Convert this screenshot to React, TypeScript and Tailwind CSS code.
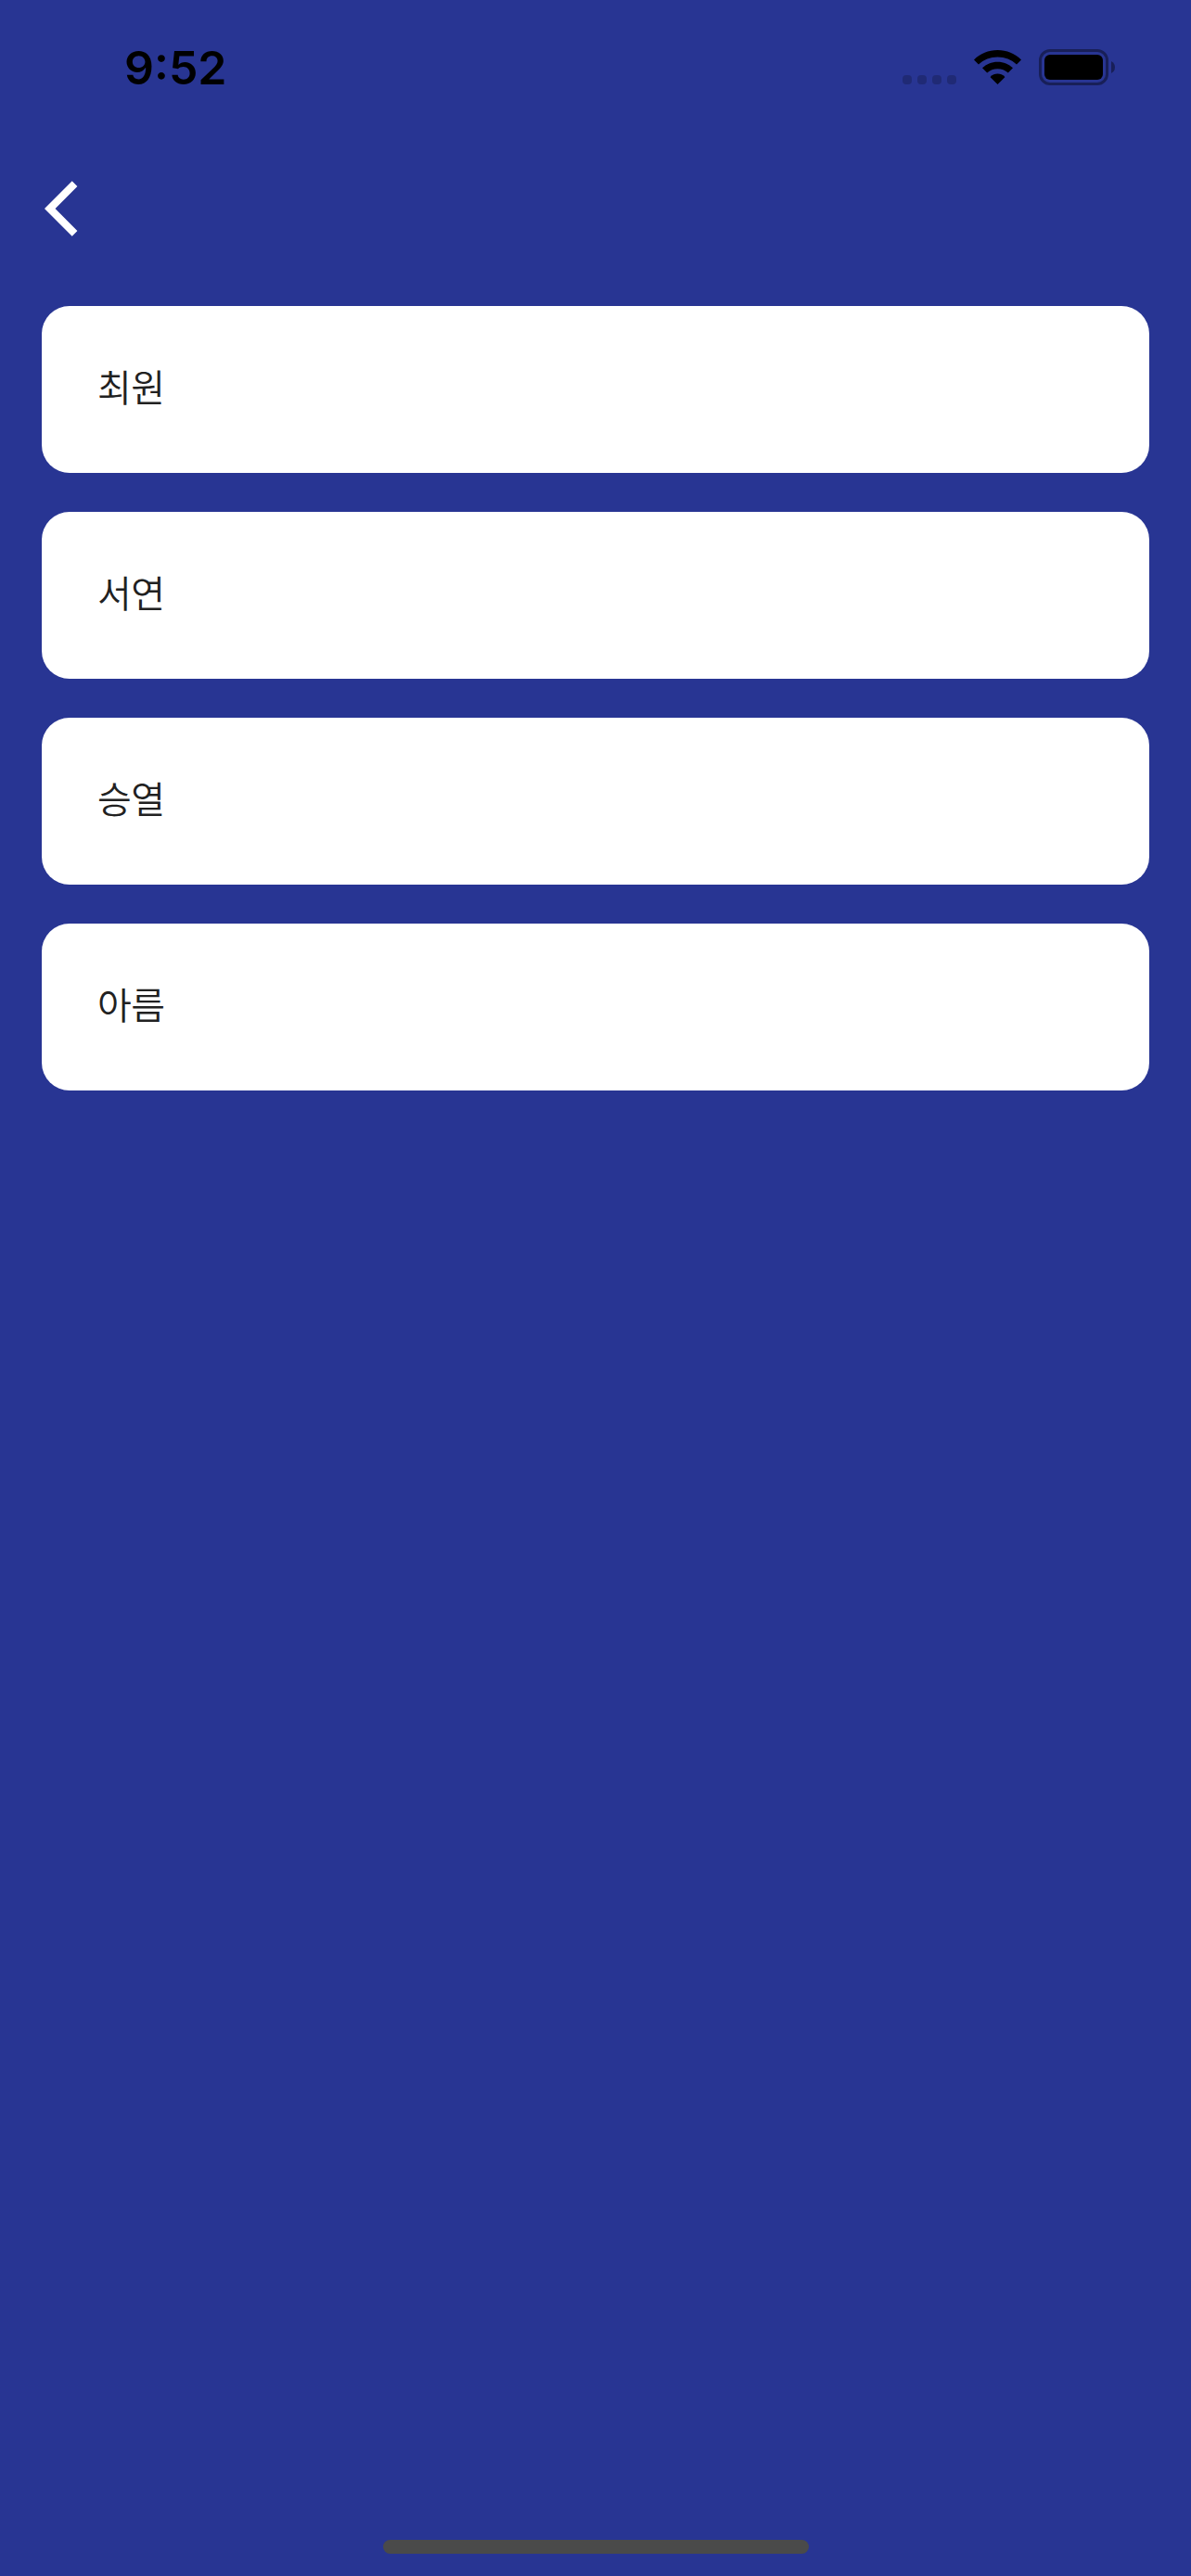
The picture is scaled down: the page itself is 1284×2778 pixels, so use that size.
const names = ['최원', '서연', '승열', '아름'];

function StatusBar() {
  return (
    <header className="flex h-[141px] shrink-0 items-start justify-between pr-[82px] pl-[134px]">
      <time className="mt-[43px] font-['Inter',sans-serif] text-[50px] leading-[60px] font-semibold text-black">
        9:52
      </time>
      <div className="mt-[53px] flex h-[39px] items-start">
        <div className="mt-[28px] flex gap-[6px]">
          {[0, 1, 2, 3].map((dot) => (
            <span key={dot} className="size-[10px] rounded-[4px] bg-black/20" />
          ))}
        </div>
        <svg className="mt-px ml-[19px] h-[37px] w-[51px]" viewBox="0 0 51 37">
          <path d="M25.5 0C35.3 0 44.3 3.9 51 10.4L46 15.5C40.500 10.500 33.500 7.600 25.500 7.600S10.500 10.500 5 15.500L0 10.400C6.700 3.900 15.700 0 25.500 0Z" />
          <path d="M25.500 12.700C31.900 12.700 37.700 15.200 42 19.300L36.800 24.500C33.700 21.700 29.800 20.200 25.500 20.200S17.300 21.700 14.200 24.500L9 19.300C13.300 15.200 19.100 12.700 25.500 12.700Z" />
          <path d="M25.500 25.500C28.400 25.500 31.100 26.700 33.200 28.700Q33.500 29.100 33.100 29.500L25.500 37L17.900 29.500Q17.500 29.100 17.800 28.700C19.900 26.700 22.600 25.500 25.500 25.500Z" />
        </svg>
        <svg className="ml-[19px] h-[39px] w-[82px]" viewBox="0 0 82 39">
          <rect x="1.500" y="1.500" width="72" height="36" rx="10.500" fill="none" stroke="#000" strokeOpacity=".4" strokeWidth="3" />
          <rect x="6" y="6" width="63" height="27" rx="6" />
          <path d="M78 13Q82 15 82 19.500T78 26Z" fillOpacity=".4" />
        </svg>
      </div>
    </header>
  );
}

export default function App() {
  return (
    <div className="flex h-[2778px] w-[1284px] flex-col overflow-hidden bg-[#283593]">
      <StatusBar />
      <nav className="flex h-[189px] shrink-0 items-start pt-[48px] pl-[48px]">
        <button aria-label="뒤로" className="h-[72px] w-[36px]">
          <svg className="h-[72px] w-[36px]" viewBox="0 0 12 24" fill="#fff">
            <path d="M11.800 4L9.900 2.050L0 12L9.900 21.950L11.800 20L3.850 12Z" />
          </svg>
        </button>
      </nav>
      <ul className="flex flex-col gap-[42px] px-[45px]">
        {names.map((name) => (
          <li key={name} className="flex h-[180px] items-center rounded-[30px] bg-white px-[60px] pb-[8px]">
            <span className="font-['Noto_Sans_CJK_KR',sans-serif] text-[40px] leading-[60px] font-[350] tracking-[-0.5px] text-[#212121]">
              {name}
            </span>
          </li>
        ))}
      </ul>
      <div className="mx-auto mt-auto mb-[24px] h-[15px] w-[459px] rounded-full bg-[#4a4a4a]" />
    </div>
  );
}
